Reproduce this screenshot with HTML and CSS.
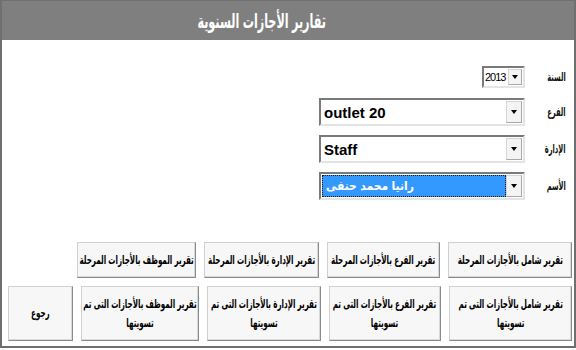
FILE: index.html
```html
<!DOCTYPE html>
<html lang="ar">
  <head>
    <meta charset="UTF-8" />
    <title>تقارير الأجازات السنوية</title>
    <link rel="stylesheet" href="styles.css">
  </head>
  <body>
    <div class="frame">
      <div class="header">
        <h1><span class="narrow">تقارير الأجازات السنوية</span></h1>
      </div>

      <div class="form">
        <div class="row row-year">
          <label><span class="narrow">السنة</span></label>
          <div class="select select-year">
            <span class="value">2013</span>
            <span class="arrow"></span>
          </div>
        </div>
        <div class="row">
          <label><span class="narrow">الفرع</span></label>
          <div class="select select-wide">
            <span class="value">outlet 20</span>
            <span class="arrow"></span>
          </div>
        </div>
        <div class="row">
          <label><span class="narrow">الإدارة</span></label>
          <div class="select select-wide">
            <span class="value">Staff</span>
            <span class="arrow"></span>
          </div>
        </div>
        <div class="row">
          <label><span class="narrow">الأسم</span></label>
          <div class="select select-wide selected">
            <span class="value"><span class="focus">رانيا محمد حنفى</span></span>
            <span class="arrow"></span>
          </div>
        </div>
      </div>

      <div class="buttons">
        <div class="btn-row">
          <button class="btn w1"><span class="txt">تقرير شامل بالأجازات المرحلة</span></button>
          <button class="btn w2"><span class="txt">تقرير الفرع بالأجازات المرحلة</span></button>
          <button class="btn w3"><span class="txt">تقرير الإدارة بالأجازات المرحلة</span></button>
          <button class="btn w4"><span class="txt">تقرير الموظف بالأجازات المرحلة</span></button>
        </div>
        <div class="btn-row tall">
          <button class="btn w1"><span class="txt">تقرير شامل بالأجازات التى تم<br>تسويتها</span></button>
          <button class="btn w2"><span class="txt">تقرير الفرع بالأجازات التى تم<br>تسويتها</span></button>
          <button class="btn w3"><span class="txt">تقرير الإدارة بالأجازات التى تم<br>تسويتها</span></button>
          <button class="btn w4"><span class="txt">تقرير الموظف بالأجازات التى تم<br>تسويتها</span></button>
          <button class="btn back"><span class="txt">رجوع</span></button>
        </div>
      </div>
    </div>
  </body>
</html>
```

FILE: styles.css
```css
* {
  margin: 0;
  padding: 0;
  box-sizing: border-box;
}

body {
  background: white;
  font-family: "Liberation Sans", "DejaVu Sans Condensed", "DejaVu Sans", sans-serif;
  color: black;
}

/* the arabic face is much wider than the original, squeeze it */
.narrow {
  display: inline-block;
  white-space: nowrap;
  transform: scaleX(0.62);
}

.frame {
  width: 576px;
  height: 348px;
  border: 2px solid #6f6f6f;
  border-top-width: 1px;
  display: flex;
  flex-direction: column;
}

.header {
  height: 39px;
  background-color: #7f7f7f;
  display: flex;
  justify-content: center;
  align-items: center;
  padding-right: 52px;
}

.header h1 {
  color: white;
  font-size: 20px;
  font-weight: bold;
}

.form {
  margin-top: 26px;
  display: flex;
  flex-direction: column;
  gap: 9px;
  padding-right: 8px;
}

.row {
  display: flex;
  direction: rtl;
  align-items: center;
  height: 28px;
}

.row-year {
  height: 22px;
  margin-bottom: 1px;
}

.row label {
  width: 41px;
  font-size: 12px;
  font-weight: bold;
  color: #111;
}

.row label .narrow {
  transform-origin: right center;
}

.select {
  direction: ltr;
  display: flex;
  height: 100%;
  border: 2px solid #e4e4e4;
  border-top-color: #7a7a7a;
  border-left-color: #7a7a7a;
  background: white;
  padding: 1px;
}

.select-year {
  width: 43px;
}

.select-wide {
  width: 206px;
}

.select .value {
  flex: 1;
  display: flex;
  align-items: center;
  padding-left: 2px;
  font-size: 15px;
  font-weight: bold;
  overflow: hidden;
  white-space: nowrap;
}

.select-year .value {
  font-size: 11px;
  font-weight: normal;
  letter-spacing: -1px;
  padding-left: 0;
}

.selected .value {
  background-color: #3399ff;
  border: 1px dotted #1a1a1a;
  padding-left: 3px;
}

.selected .focus {
  color: white;
  font-size: 12px;
}

.arrow {
  width: 16px;
  background: #f4f4f4;
  border: 1px solid #d6d6d6;
  border-right-color: #a8a8a8;
  border-bottom-color: #a8a8a8;
  position: relative;
}

.select-year .arrow {
  width: 14px;
}

.arrow::after {
  content: "";
  position: absolute;
  left: 50%;
  margin-left: -3px;
  top: 50%;
  margin-top: -2px;
  border-left: 3px solid transparent;
  border-right: 3px solid transparent;
  border-top: 4px solid black;
}

.buttons {
  margin-top: 42px;
  display: flex;
  flex-direction: column;
  gap: 8px;
  padding: 0 2px 0 6px;
}

.btn-row {
  display: flex;
  direction: rtl;
  gap: 8px;
  height: 36px;
}

.btn-row.tall {
  height: 55px;
}

.btn {
  font-family: inherit;
  font-size: 12px;
  font-weight: bold;
  line-height: 19px;
  color: black;
  background-color: #f7f7f7;
  border: 1px solid #d0d0d0;
  border-right-color: #8a8a8a;
  border-bottom-color: #8a8a8a;
  box-shadow: inset -1px -1px #d8d8d8;
  padding: 0;
  overflow: hidden;
}

/* laid out wider, then scaled back into the button */
.btn .txt {
  display: block;
  width: 151.5%;
  margin: 0 -25.75%;
  white-space: nowrap;
  text-align: center;
  transform: scaleX(0.66);
}

.w1 {
  width: 124px;
}

.w2 {
  width: 113px;
}

.w3 {
  width: 115px;
}

.w4 {
  width: 119px;
}

.back {
  width: 65px;
  margin-right: auto;
}
```
